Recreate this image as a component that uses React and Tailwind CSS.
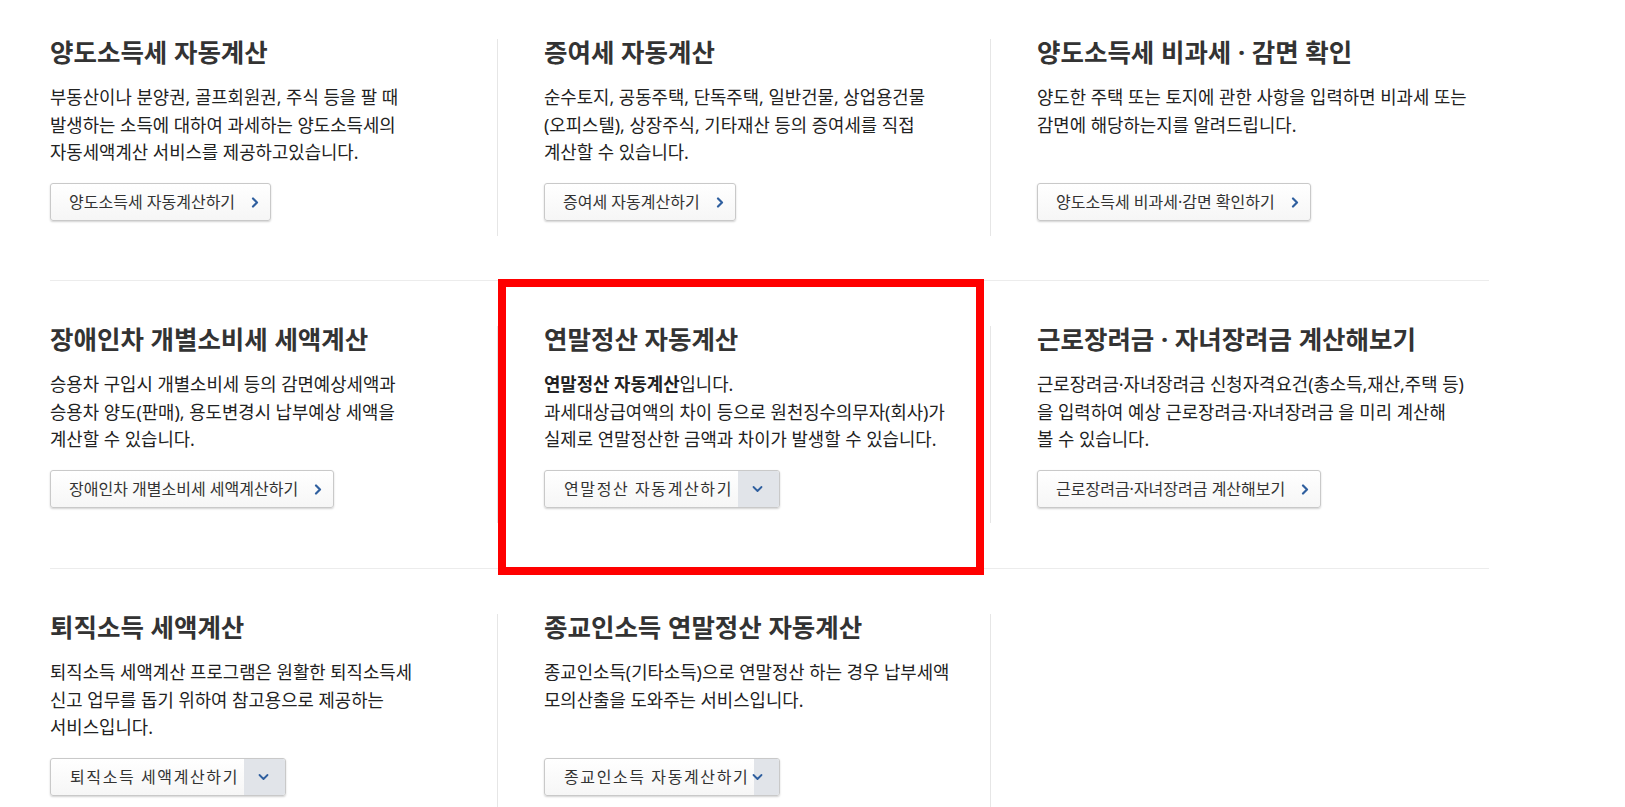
import React from 'react';

const FONT = { fontFamily: '"Noto Sans", "Noto Sans CJK KR", sans-serif' };

const rows = [
  [
    {
      title: '양도소득세 자동계산',
      lines: ['부동산이나 분양권, 골프회원권, 주식 등을 팔 때', '발생하는 소득에 대하여 과세하는 양도소득세의', '자동세액계산 서비스를 제공하고있습니다.'],
      button: '양도소득세 자동계산하기',
    },
    {
      title: '증여세 자동계산',
      lines: ['순수토지, 공동주택, 단독주택, 일반건물, 상업용건물', '(오피스텔), 상장주식, 기타재산 등의 증여세를 직접', '계산할 수 있습니다.'],
      button: '증여세 자동계산하기',
    },
    {
      title: '양도소득세 비과세 · 감면 확인',
      lines: ['양도한 주택 또는 토지에 관한 사항을 입력하면 비과세 또는', '감면에 해당하는지를 알려드립니다.'],
      button: '양도소득세 비과세·감면 확인하기',
    },
  ],
  [
    {
      title: '장애인차 개별소비세 세액계산',
      lines: ['승용차 구입시 개별소비세 등의 감면예상세액과', '승용차 양도(판매), 용도변경시 납부예상 세액을', '계산할 수 있습니다.'],
      button: '장애인차 개별소비세 세액계산하기',
    },
    {
      title: '연말정산 자동계산',
      lead: '연말정산 자동계산',
      lines: ['입니다.', '과세대상급여액의 차이 등으로 원천징수의무자(회사)가', '실제로 연말정산한 금액과 차이가 발생할 수 있습니다.'],
      button: '연말정산 자동계산하기',
      dropdown: true,
      highlight: true,
    },
    {
      title: '근로장려금 · 자녀장려금 계산해보기',
      lines: ['근로장려금·자녀장려금 신청자격요건(총소득,재산,주택 등)', '을 입력하여 예상 근로장려금·자녀장려금 을 미리 계산해', '볼 수 있습니다.'],
      button: '근로장려금·자녀장려금 계산해보기',
    },
  ],
  [
    {
      title: '퇴직소득 세액계산',
      lines: ['퇴직소득 세액계산 프로그램은 원활한 퇴직소득세', '신고 업무를 돕기 위하여 참고용으로 제공하는', '서비스입니다.'],
      button: '퇴직소득 세액계산하기',
      dropdown: true,
    },
    {
      title: '종교인소득 연말정산 자동계산',
      lines: ['종교인소득(기타소득)으로 연말정산 하는 경우 납부세액', '모의산출을 도와주는 서비스입니다.'],
      button: '종교인소득 자동계산하기',
      dropdown: true,
    },
    null,
  ],
];

const ArrowRight = () => (
  <svg width="8" height="11" viewBox="0 0 8 11" fill="none">
    <path d="M2 1.5l4 4-4 4" stroke="#2f5f9f" strokeWidth="2.2" strokeLinecap="round" strokeLinejoin="round" />
  </svg>
);

const ArrowDown = () => (
  <svg width="11" height="7" viewBox="0 0 11 7" fill="none">
    <path d="M1.5 1.5l4 4 4-4" stroke="#2f5f9f" strokeWidth="1.8" strokeLinecap="round" strokeLinejoin="round" />
  </svg>
);

const LinkButton = ({ label }) => (
  <button className="inline-flex h-[38px] items-center gap-[16px] rounded-[3px] border border-[#c9c9c9] bg-gradient-to-b from-white to-[#f6f6f6] pl-[18px] pr-[11px] text-[16px] text-[#333] shadow-[0_1px_2px_rgba(0,0,0,0.18)]">
    <span className="whitespace-nowrap">{label}</span>
    <ArrowRight />
  </button>
);

const DropButton = ({ label }) => (
  <button className="relative flex h-[38px] w-[236px] items-stretch overflow-hidden rounded-[3px] border border-[#c9c9c9] bg-gradient-to-b from-white to-[#f6f6f6] text-[16px] text-[#333] shadow-[0_1px_2px_rgba(0,0,0,0.18)]">
    <span className="flex shrink-0 items-center whitespace-nowrap pl-[19px] pr-[5px] tracking-[1.6px]">{label}</span>
    <span className="flex-1 bg-[#e1e4e9]"></span>
    <span className="absolute right-[16px] top-1/2 -translate-y-1/2">
      <ArrowDown />
    </span>
  </button>
);

const Cell = ({ item, index }) => {
  if (!item) return <div className={index > 0 ? 'border-l border-[#e6e6e6]' : ''}></div>;
  return (
    <div className={`relative pb-[15px] ${index > 0 ? 'border-l border-[#e6e6e6] pl-[46px]' : ''}`}>
      {item.highlight && (
        <div className="pointer-events-none absolute left-0 top-[-47px] h-[296px] w-[486px] border-[8px] border-[#ff0000]"></div>
      )}
      <h2 className="h-[26px] whitespace-nowrap text-[25.5px] font-bold leading-[26px] text-[#333]">{item.title}</h2>
      <p className="mt-[19px] h-[83px] whitespace-nowrap text-[17.8px] leading-[27.5px] text-[#222]">
        {item.lines.map((line, idx) => (
          <React.Fragment key={idx}>
            {idx === 0 && item.lead && <b>{item.lead}</b>}
            {line}
            {idx < item.lines.length - 1 && <br />}
          </React.Fragment>
        ))}
      </p>
      <div className="mt-[16px]">
        {item.dropdown ? <DropButton label={item.button} /> : <LinkButton label={item.button} />}
      </div>
    </div>
  );
};

const App = () => {
  return (
    <div className="h-[807px] overflow-hidden bg-white" style={FONT}>
      <div className="ml-[50px] w-[1439px]">
        {rows.map((row, r) => (
          <div
            key={r}
            className={`grid grid-cols-[447px_493px_1fr] ${r === 0 ? 'pt-[39px] pb-[44px]' : 'border-t border-[#ececec] py-[45px]'}`}
          >
            {row.map((item, c) => (
              <Cell key={c} item={item} index={c} />
            ))}
          </div>
        ))}
      </div>
    </div>
  );
};

export default App;
